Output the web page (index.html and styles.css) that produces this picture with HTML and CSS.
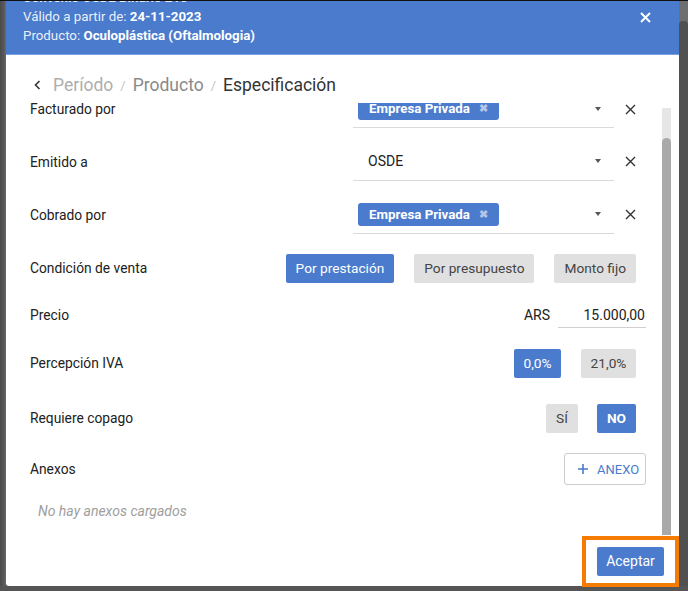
FILE: index.html
```html
<!DOCTYPE html>
<html lang="es">
<head>
<meta charset="utf-8">
<title>Especificación</title>
<link rel="stylesheet" href="styles.css">
</head>
<body>
<div class="screen">
  <div class="edge-left"></div>
  <div class="dialog">
    <header class="head">
      <div class="head-text">
        <div class="head-line head-title">Convenio OSDE Binario 210</div>
        <div class="head-line">Válido a partir de: <b>24-11-2023</b></div>
        <div class="head-line">Producto: <b>Oculoplástica (Oftalmologia)</b></div>
      </div>
      <svg class="head-close" width="11" height="11" viewBox="0 0 11 11"><path d="M1 1L10 10M10 1L1 10" stroke="#fff" stroke-width="2" fill="none"/></svg>
    </header>
    <nav class="crumbs">
      <svg class="crumb-back" width="7" height="10" viewBox="0 0 7 10"><path d="M5.5 1L1.5 5L5.5 9" stroke="#333" stroke-width="1.6" fill="none"/></svg>
      <span class="crumb crumb-a">Período</span>
      <span class="crumb-sep">/</span>
      <span class="crumb crumb-b">Producto</span>
      <span class="crumb-sep">/</span>
      <span class="crumb crumb-c">Especificación</span>
    </nav>
    <div class="scroll">
      <div class="form">
        <div class="row r-sel1">
          <span class="label">Facturado por</span>
          <div class="field"><span class="chip">Empresa Privada<span class="chip-x">✖</span></span><span class="caret"></span></div>
          <span class="clear"><svg width="11" height="11" viewBox="0 0 11 11"><path d="M1 1L10 10M10 1L1 10" stroke="#333" stroke-width="1.4" fill="none"/></svg></span>
        </div>
        <div class="row r-sel">
          <span class="label">Emitido a</span>
          <div class="field"><span class="value">OSDE</span><span class="caret"></span></div>
          <span class="clear"><svg width="11" height="11" viewBox="0 0 11 11"><path d="M1 1L10 10M10 1L1 10" stroke="#333" stroke-width="1.4" fill="none"/></svg></span>
        </div>
        <div class="row r-sel">
          <span class="label">Cobrado por</span>
          <div class="field"><span class="chip">Empresa Privada<span class="chip-x">✖</span></span><span class="caret"></span></div>
          <span class="clear"><svg width="11" height="11" viewBox="0 0 11 11"><path d="M1 1L10 10M10 1L1 10" stroke="#333" stroke-width="1.4" fill="none"/></svg></span>
        </div>
        <div class="row r-cond">
          <span class="label">Condición de venta</span>
          <div class="group">
            <span class="btn on">Por prestación</span>
            <span class="btn">Por presupuesto</span>
            <span class="btn">Monto fijo</span>
          </div>
        </div>
        <div class="row r-price">
          <span class="label">Precio</span>
          <span class="currency">ARS</span>
          <span class="amount">15.000,00</span>
        </div>
        <div class="row r-iva">
          <span class="label">Percepción IVA</span>
          <div class="group">
            <span class="btn on w-00">0,0%</span>
            <span class="btn w-21">21,0%</span>
          </div>
        </div>
        <div class="row r-cop">
          <span class="label">Requiere copago</span>
          <div class="group group-yn">
            <span class="btn w-si">SÍ</span>
            <span class="btn on w-no">NO</span>
          </div>
        </div>
        <div class="row r-anx">
          <span class="label">Anexos</span>
          <span class="outline"><svg width="10" height="10" viewBox="0 0 10 10"><path d="M5 0V10M0 5H10" stroke="#4a7bcc" stroke-width="1.6" fill="none"/></svg>ANEXO</span>
        </div>
        <div class="empty">No hay anexos cargados</div>
      </div>
      <div class="sbar"><div class="sbar-thumb"></div></div>
    </div>
    <footer class="foot">
      <span class="btn on accept">Aceptar</span>
      <span class="mark"></span>
    </footer>
  </div>
  <div class="edge-right"><div class="edge-thumb"></div></div>
</div>
</body>
</html>
```
FILE: styles.css
```css
* { box-sizing: border-box; }
html, body { margin: 0; padding: 0; }
body {
  width: 688px;
  height: 591px;
  overflow: hidden;
  background: #555;
  font-family: Roboto, "Liberation Sans", sans-serif;
  font-size: 14px;
  color: #212121;
}
.screen {
  display: flex;
  height: 591px;
  border-top: 1px solid #111;
  padding-bottom: 5px;
}
.edge-left {
  width: 6px;
  background: linear-gradient(to right, #4a4a4a, #5a5a5a 70%, #6a6a6a);
}
.edge-right {
  width: 9px;
  background: #6f6f6f;
  display: flex;
  flex-direction: column;
  padding-top: 20px;
}
.edge-thumb {
  flex: 1;
  background: #505050;
  border-radius: 4px 4px 0 0;
}
.dialog {
  width: 673px;
  background: #fff;
  display: flex;
  flex-direction: column;
  border-radius: 0 0 3px 3px;
}
.head {
  height: 54px;
  background: #4a7bcc;
  border-bottom: 1px solid #7aa2e3;
  display: flex;
  justify-content: space-between;
  align-items: flex-start;
  padding: 0 28px 0 17px;
  overflow: hidden;
  color: rgba(255,255,255,0.9);
  font-size: 13.3px;
}
.head-text { margin-top: -13px; }
.head-line { line-height: 19px; }
.head-line b { font-weight: 700; color: #fff; }
.head-title { font-weight: 700; }
.head-close { margin-top: 11px; }
.crumbs {
  height: 48px;
  display: flex;
  align-items: center;
  padding: 12px 0 0 28px;
  font-size: 17.5px;
}
.crumb-back { margin-right: 12px; }
.crumb-a { color: #aeaeae; }
.crumb-b { color: #8a8a8a; }
.crumb-c { color: #333; }
.crumb-sep { color: #c4c4c4; font-size: 13px; margin: 0 7px; }
.scroll {
  height: 433px;
  overflow: hidden;
  position: relative;
}
.form {
  margin-top: -20px;
  padding: 0 33px 0 24px;
}
.row {
  display: flex;
  align-items: center;
}
.label { flex: 1; font-size: 13.8px; }
.r-sel1 { height: 52px; }
.r-sel { height: 53px; }
.r-cond { height: 54px; }
.r-price { height: 40px; }
.r-iva { height: 56px; }
.r-cop { height: 54px; }
.r-anx { height: 48px; }
.field {
  width: 261px;
  height: 38px;
  border-bottom: 1px solid #dadada;
  display: flex;
  align-items: center;
  padding: 0 13px 0 5px;
}
.value { padding-left: 10px; flex: 1; }
.chip {
  height: 23px;
  background: #4a7bcc;
  color: #fff;
  font-weight: 700;
  font-size: 13.3px;
  border-radius: 3px;
  padding: 0 11px;
  display: flex;
  align-items: center;
  margin-right: auto;
}
.chip-x { color: #b4c6e8; font-size: 11px; margin-left: 9px; }
.caret {
  width: 0; height: 0;
  border-left: 3.5px solid transparent;
  border-right: 3.5px solid transparent;
  border-top: 4px solid #555;
}
.clear {
  width: 32px;
  display: flex;
  justify-content: center;
}
.group { display: flex; gap: 20px; margin-right: 10px; }
.group-yn { gap: 19px; }
.btn {
  height: 29px;
  padding: 0 10px;
  display: flex;
  align-items: center;
  justify-content: center;
  background: #e0e0e0;
  color: #444;
  border-radius: 2px;
  font-size: 13.7px;
}
.btn.on { background: #4a7bcc; color: #fff; }
.w-00 { width: 47px; padding: 0; }
.w-21 { width: 55px; padding: 0; }
.w-si { width: 32px; padding: 0; }
.w-no { width: 39px; padding: 0; font-weight: 700; }
.currency { margin-right: 8px; }
.amount {
  width: 88px;
  height: 25px;
  border-bottom: 1px solid #d0d0d0;
  text-align: right;
  padding-right: 1px;
  line-height: 24px;
}
.outline {
  width: 82px;
  height: 32px;
  border: 1px solid #ccc;
  border-radius: 3px;
  display: flex;
  align-items: center;
  gap: 9px;
  padding-left: 13px;
  color: #4a7bcc;
  font-size: 13px;
}
.empty {
  margin-top: 8px;
  padding-left: 8px;
  line-height: 20px;
  font-style: italic;
  color: #9e9e9e;
}
.sbar {
  position: absolute;
  right: 8px;
  top: 5px;
  bottom: 1px;
  width: 9px;
  background: #e6e6e6;
  padding-top: 30px;
  display: flex;
  flex-direction: column;
}
.sbar-thumb {
  flex: 1;
  background: #a9a9a9;
  border-radius: 5px 5px 0 0;
}
.foot {
  height: 50px;
  position: relative;
  display: flex;
  justify-content: flex-end;
  align-items: center;
  padding-right: 15px;
}
.accept { width: 67px; padding: 0; font-size: 14px; }
.mark {
  position: absolute;
  right: 0;
  top: 0;
  width: 97px;
  height: 51px;
  border: 4px solid #f57c00;
}
```
